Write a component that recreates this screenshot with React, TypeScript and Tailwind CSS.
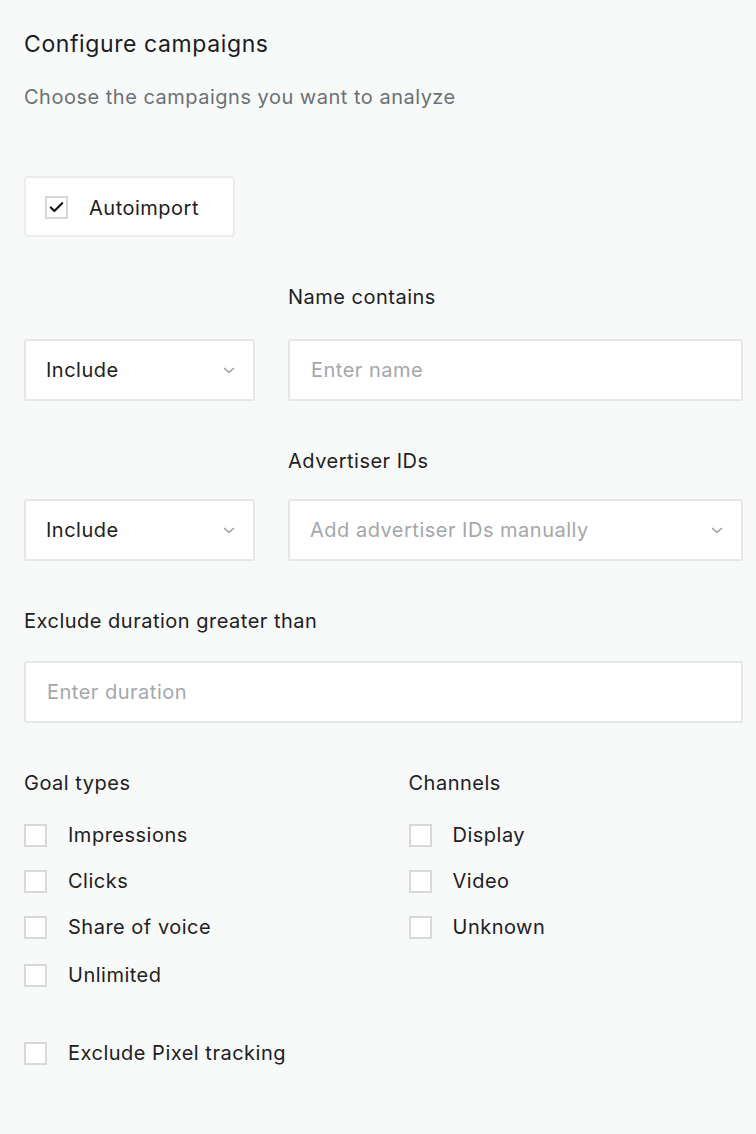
import { Check } from 'lucide-react';

const font = { fontFamily: 'Inter, "Noto Sans", sans-serif' };

function Chevron() {
  return (
    <svg className="w-3 h-3 text-[#8f9398]" viewBox="0 0 12 12" fill="none">
      <path d="M1 4l5 4.5L11 4" stroke="currentColor" strokeWidth="1.3" />
    </svg>
  );
}

function Box({ checked = false }: { checked?: boolean }) {
  return (
    <span className="w-[23px] h-[23px] shrink-0 border-2 border-[#d6d8db] bg-white flex items-center justify-center">
      {checked && <Check className="w-[17px] h-[17px] text-[#111213]" strokeWidth={3} />}
    </span>
  );
}

function CheckRow({ label }: { label: string }) {
  return (
    <label className="flex items-center gap-[21px] h-[24px] text-[20px] text-[#1e2021]">
      <Box />
      <span>{label}</span>
    </label>
  );
}

function Select({ value, placeholder = false, wide = false }: { value: string; placeholder?: boolean; wide?: boolean }) {
  return (
    <div
      className={`h-[62px] bg-white border-2 border-[#e6e8e8] rounded-[2px] flex items-center justify-between text-[20px] ${
        wide ? 'flex-1 pl-5 pr-[18px]' : 'w-[231px] pl-5 pr-[18px]'
      } ${placeholder ? 'text-[#a4a7ab]' : 'text-[#1e2021]'}`}
    >
      <span>{value}</span>
      <Chevron />
    </div>
  );
}

function TextField({ placeholder }: { placeholder: string }) {
  return (
    <div className="flex-1 h-[62px] bg-white border-2 border-[#e6e8e8] rounded-[2px] flex items-center px-[21px] text-[20px] text-[#a4a7ab]">
      {placeholder}
    </div>
  );
}

export default function App() {
  return (
    <main className="min-h-screen bg-[#f8fafa] pl-6 pr-[13px] pt-[28px] pb-10 tracking-[0.5px]" style={font}>
      <h1 className="text-[23px] text-[#1b1c1d] leading-[32px] tracking-[0.6px]">Configure campaigns</h1>
      <p className="mt-[23px] text-[20px] text-[#6c7075] leading-[28px]">Choose the campaigns you want to analyze</p>

      <div className="mt-[65px] w-[211px] h-[61px] bg-white border-2 border-[#eceeee] rounded-[4px] flex items-center gap-[21px] pl-[19px] pt-[2px] text-[20px] text-[#1e2021]">
        <Box checked />
        <span>Autoimport</span>
      </div>

      <div className="mt-[46px] flex gap-[33px]">
        <div className="w-[231px]" />
        <div className="text-[20px] text-[#1e2021] leading-[28px]">Name contains</div>
      </div>
      <div className="mt-[28px] flex gap-[33px]">
        <Select value="Include" />
        <TextField placeholder="Enter name" />
      </div>

      <div className="mt-[46px] flex gap-[33px]">
        <div className="w-[231px]" />
        <div className="text-[20px] text-[#1e2021] leading-[28px]">Advertiser IDs</div>
      </div>
      <div className="mt-[24px] flex gap-[33px]">
        <Select value="Include" />
        <Select value="Add advertiser IDs manually" placeholder wide />
      </div>

      <div className="mt-[46px] text-[20px] text-[#1e2021] leading-[28px]">Exclude duration greater than</div>
      <div className="mt-[26px] flex">
        <TextField placeholder="Enter duration" />
      </div>

      <div className="mt-[46px] grid grid-cols-2">
        <div>
          <div className="text-[20px] text-[#1e2021] leading-[28px]">Goal types</div>
          <div className="mt-[26px] flex flex-col gap-[22px]">
            <CheckRow label="Impressions" />
            <CheckRow label="Clicks" />
            <CheckRow label="Share of voice" />
            <div className="mt-[2px]">
              <CheckRow label="Unlimited" />
            </div>
          </div>
        </div>
        <div className="pl-[25px]">
          <div className="text-[20px] text-[#1e2021] leading-[28px]">Channels</div>
          <div className="mt-[26px] flex flex-col gap-[22px]">
            <CheckRow label="Display" />
            <CheckRow label="Video" />
            <CheckRow label="Unknown" />
          </div>
        </div>
      </div>

      <div className="mt-[54px]">
        <CheckRow label="Exclude Pixel tracking" />
      </div>
    </main>
  );
}
